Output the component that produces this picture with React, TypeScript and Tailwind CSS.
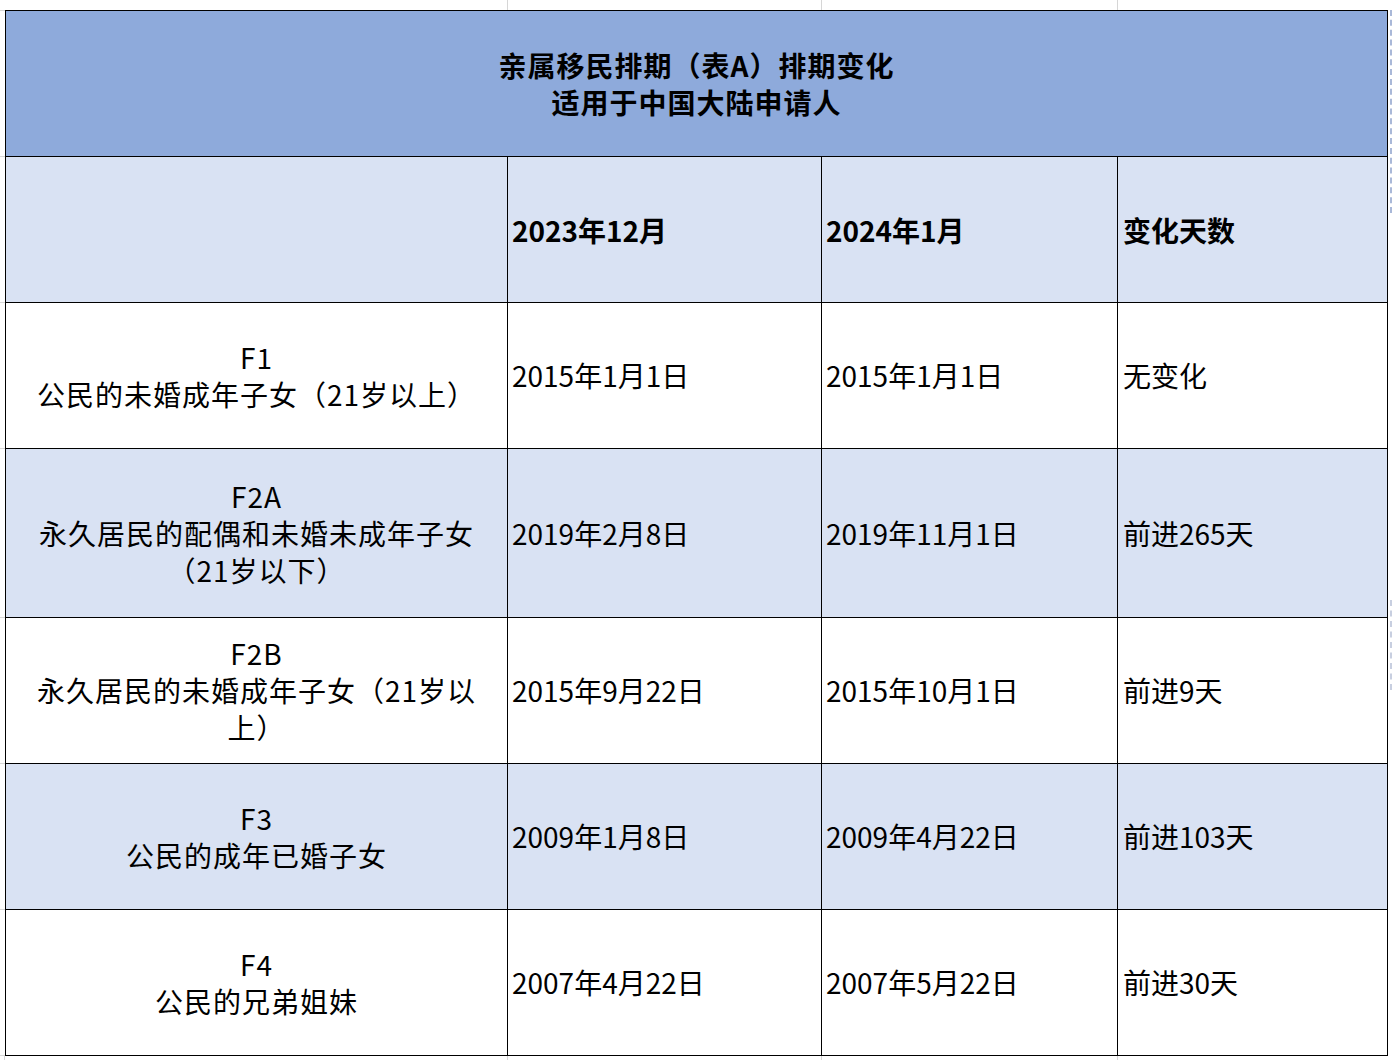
import React from "react";

const font = { fontFamily: '"Noto Sans CJK SC", "Noto Sans", sans-serif' };

type Row = {
  h: string;
  bg: string;
  label: string[];
  a: string;
  b: string;
  c: string;
};

const rows: Row[] = [
  { h: "h-[146px]", bg: "bg-white", label: ["F1", "公民的未婚成年子女（21岁以上）"], a: "2015年1月1日", b: "2015年1月1日", c: "无变化" },
  { h: "h-[169px]", bg: "bg-[#d9e2f3]", label: ["F2A", "永久居民的配偶和未婚未成年子女", "（21岁以下）"], a: "2019年2月8日", b: "2019年11月1日", c: "前进265天" },
  { h: "h-[146px]", bg: "bg-white", label: ["F2B", "永久居民的未婚成年子女（21岁以", "上）"], a: "2015年9月22日", b: "2015年10月1日", c: "前进9天" },
  { h: "h-[146px]", bg: "bg-[#d9e2f3]", label: ["F3", "公民的成年已婚子女"], a: "2009年1月8日", b: "2009年4月22日", c: "前进103天" },
  { h: "h-[146px]", bg: "bg-white", label: ["F4", "公民的兄弟姐妹"], a: "2007年4月22日", b: "2007年5月22日", c: "前进30天" },
];

const rowHeights = ["h-[146px]", "h-[146px]", "h-[146px]", "h-[169px]", "h-[146px]", "h-[146px]", "h-[146px]"];

export default function App() {
  return (
    <div className="w-[1392px] h-[1060px] bg-white overflow-hidden text-black flex flex-col" style={font}>
      {/* top gridline strip */}
      <div className="flex h-[10px] shrink-0">
        <div className="w-[508px] border-r border-[#d6d6d6]" />
        <div className="w-[314px] border-r border-[#d6d6d6]" />
        <div className="w-[296px] border-r border-[#d6d6d6]" />
        <div className="flex-1" />
      </div>
      <div className="flex shrink-0">
        {/* left gridline strip */}
        <div className="w-[5px] flex flex-col border-t border-[#d6d6d6]">
          {rowHeights.map((h, i) => (
            <div key={i} className={`${h} border-b border-[#d6d6d6]`} />
          ))}
        </div>
        {/* table */}
        <div className="border-l border-t border-black flex flex-col">
          <div className="h-[146px] w-[1382px] bg-[#8eaadb] border-r border-b border-black flex flex-col items-center justify-center text-[28px] leading-[37px] font-bold tracking-[1px]">
            <div>亲属移民排期（表A）排期变化</div>
            <div>适用于中国大陆申请人</div>
          </div>
          <div className="flex h-[146px] bg-[#d9e2f3] text-[28px] font-bold">
            <div className="w-[502px] border-r border-b border-black" />
            <div className="w-[314px] border-r border-b border-black flex items-center pl-[4px]">2023年12月</div>
            <div className="w-[296px] border-r border-b border-black flex items-center pl-[4px]">2024年1月</div>
            <div className="w-[270px] border-r border-b border-black flex items-center pl-[5px]">变化天数</div>
          </div>
          {rows.map((r, i) => (
            <div key={i} className={`flex ${r.h} ${r.bg} text-[28px] leading-[37px]`}>
              <div className="w-[502px] border-r border-b border-black flex flex-col items-center justify-center tracking-[1px]">
                {r.label.map((l, j) => (
                  <div key={j} className="whitespace-nowrap">{l}</div>
                ))}
              </div>
              <div className="w-[314px] border-r border-b border-black flex items-center pl-[4px] whitespace-nowrap">{r.a}</div>
              <div className="w-[296px] border-r border-b border-black flex items-center pl-[4px] whitespace-nowrap">{r.b}</div>
              <div className="w-[270px] border-r border-b border-black flex items-center pl-[5px] whitespace-nowrap">{r.c}</div>
            </div>
          ))}
        </div>
        {/* right strip with page break marker */}
        <div className="flex-1 flex flex-col">
          <div className="h-[203px] w-[4px] border-r-2 border-dashed border-[#a9b8d8]" />
          <div className="h-[387px]" />
          <div className="h-[90px] w-[4px] border-r-2 border-dashed border-[#c8cfe0]" />
        </div>
      </div>
      {/* bottom gridline strip */}
      <div className="flex flex-1">
        <div className="w-[5px] border-r border-[#d6d6d6]" />
        <div className="w-[503px] border-r border-[#d6d6d6]" />
        <div className="w-[314px] border-r border-[#d6d6d6]" />
        <div className="w-[296px] border-r border-[#d6d6d6]" />
        <div className="flex-1" />
      </div>
    </div>
  );
}
